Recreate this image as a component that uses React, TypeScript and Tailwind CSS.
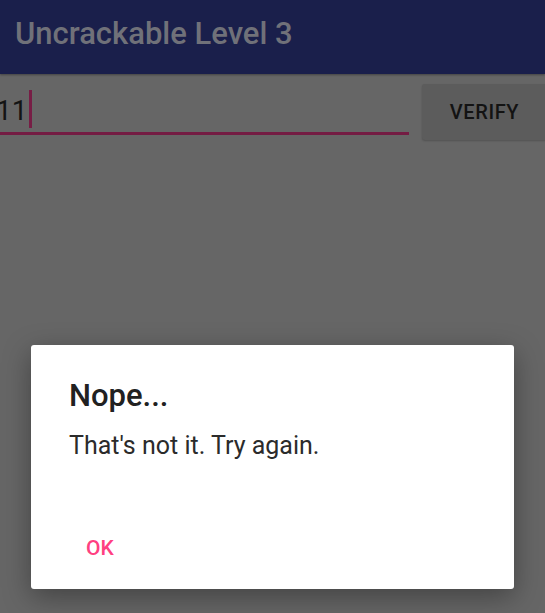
import React from "react";

export default function App() {
  return (
    <div className="relative w-[545px] h-[613px] overflow-hidden bg-[#666666] font-['Roboto',sans-serif]">
      {/* App bar (dimmed) */}
      <header className="h-[74px] bg-[#1a1f4b] pl-[15px] pt-[16px] shadow-[0_1px_2px_rgba(0,0,0,0.35)] relative z-10">
        <h1 className="text-[31px] leading-[36px] font-medium text-[#707179]">Uncrackable Level 3</h1>
      </header>

      {/* Input row */}
      <div className="flex items-start">
        <div className="w-[409px] shrink-0 flex flex-col">
          <div className="mt-[16px] h-[38px] flex items-end">
            <span className="ml-[-4px] text-[28px] leading-[34px] text-[#141414]">11</span>
            <span className="ml-[2px] w-[3px] h-[38px] bg-[#771d45]" />
          </div>
          <div className="mt-[4px] h-[3px] bg-[#741c43]" />
        </div>
        <button className="ml-[13px] mt-[10px] w-[125px] h-[56px] shrink-0 rounded-[3px] bg-[#5c5c5c] text-[20px] font-medium tracking-[0.6px] text-[#131313] shadow-[0_1px_2px_rgba(0,0,0,0.2)]">
          VERIFY
        </button>
      </div>

      {/* Dialog over dimmed content */}
      <div className="absolute inset-0 z-20 flex justify-center pt-[345px]">
        <div className="w-[483px] h-[244px] rounded-[3px] bg-white shadow-[0_8px_28px_rgba(0,0,0,0.35)] flex flex-col">
          <h2 className="pt-[32px] px-[38px] text-[31px] leading-[38px] font-medium text-[#212121]">Nope...</h2>
          <p className="mt-[15px] px-[38px] text-[25px] leading-[32px] text-[#2b2b2b]">That's not it. Try again.</p>
          <div className="mt-[74px] pl-[55px]">
            <button className="text-[21px] leading-[24px] font-medium text-[#ff4081]">OK</button>
          </div>
        </div>
      </div>
    </div>
  );
}
